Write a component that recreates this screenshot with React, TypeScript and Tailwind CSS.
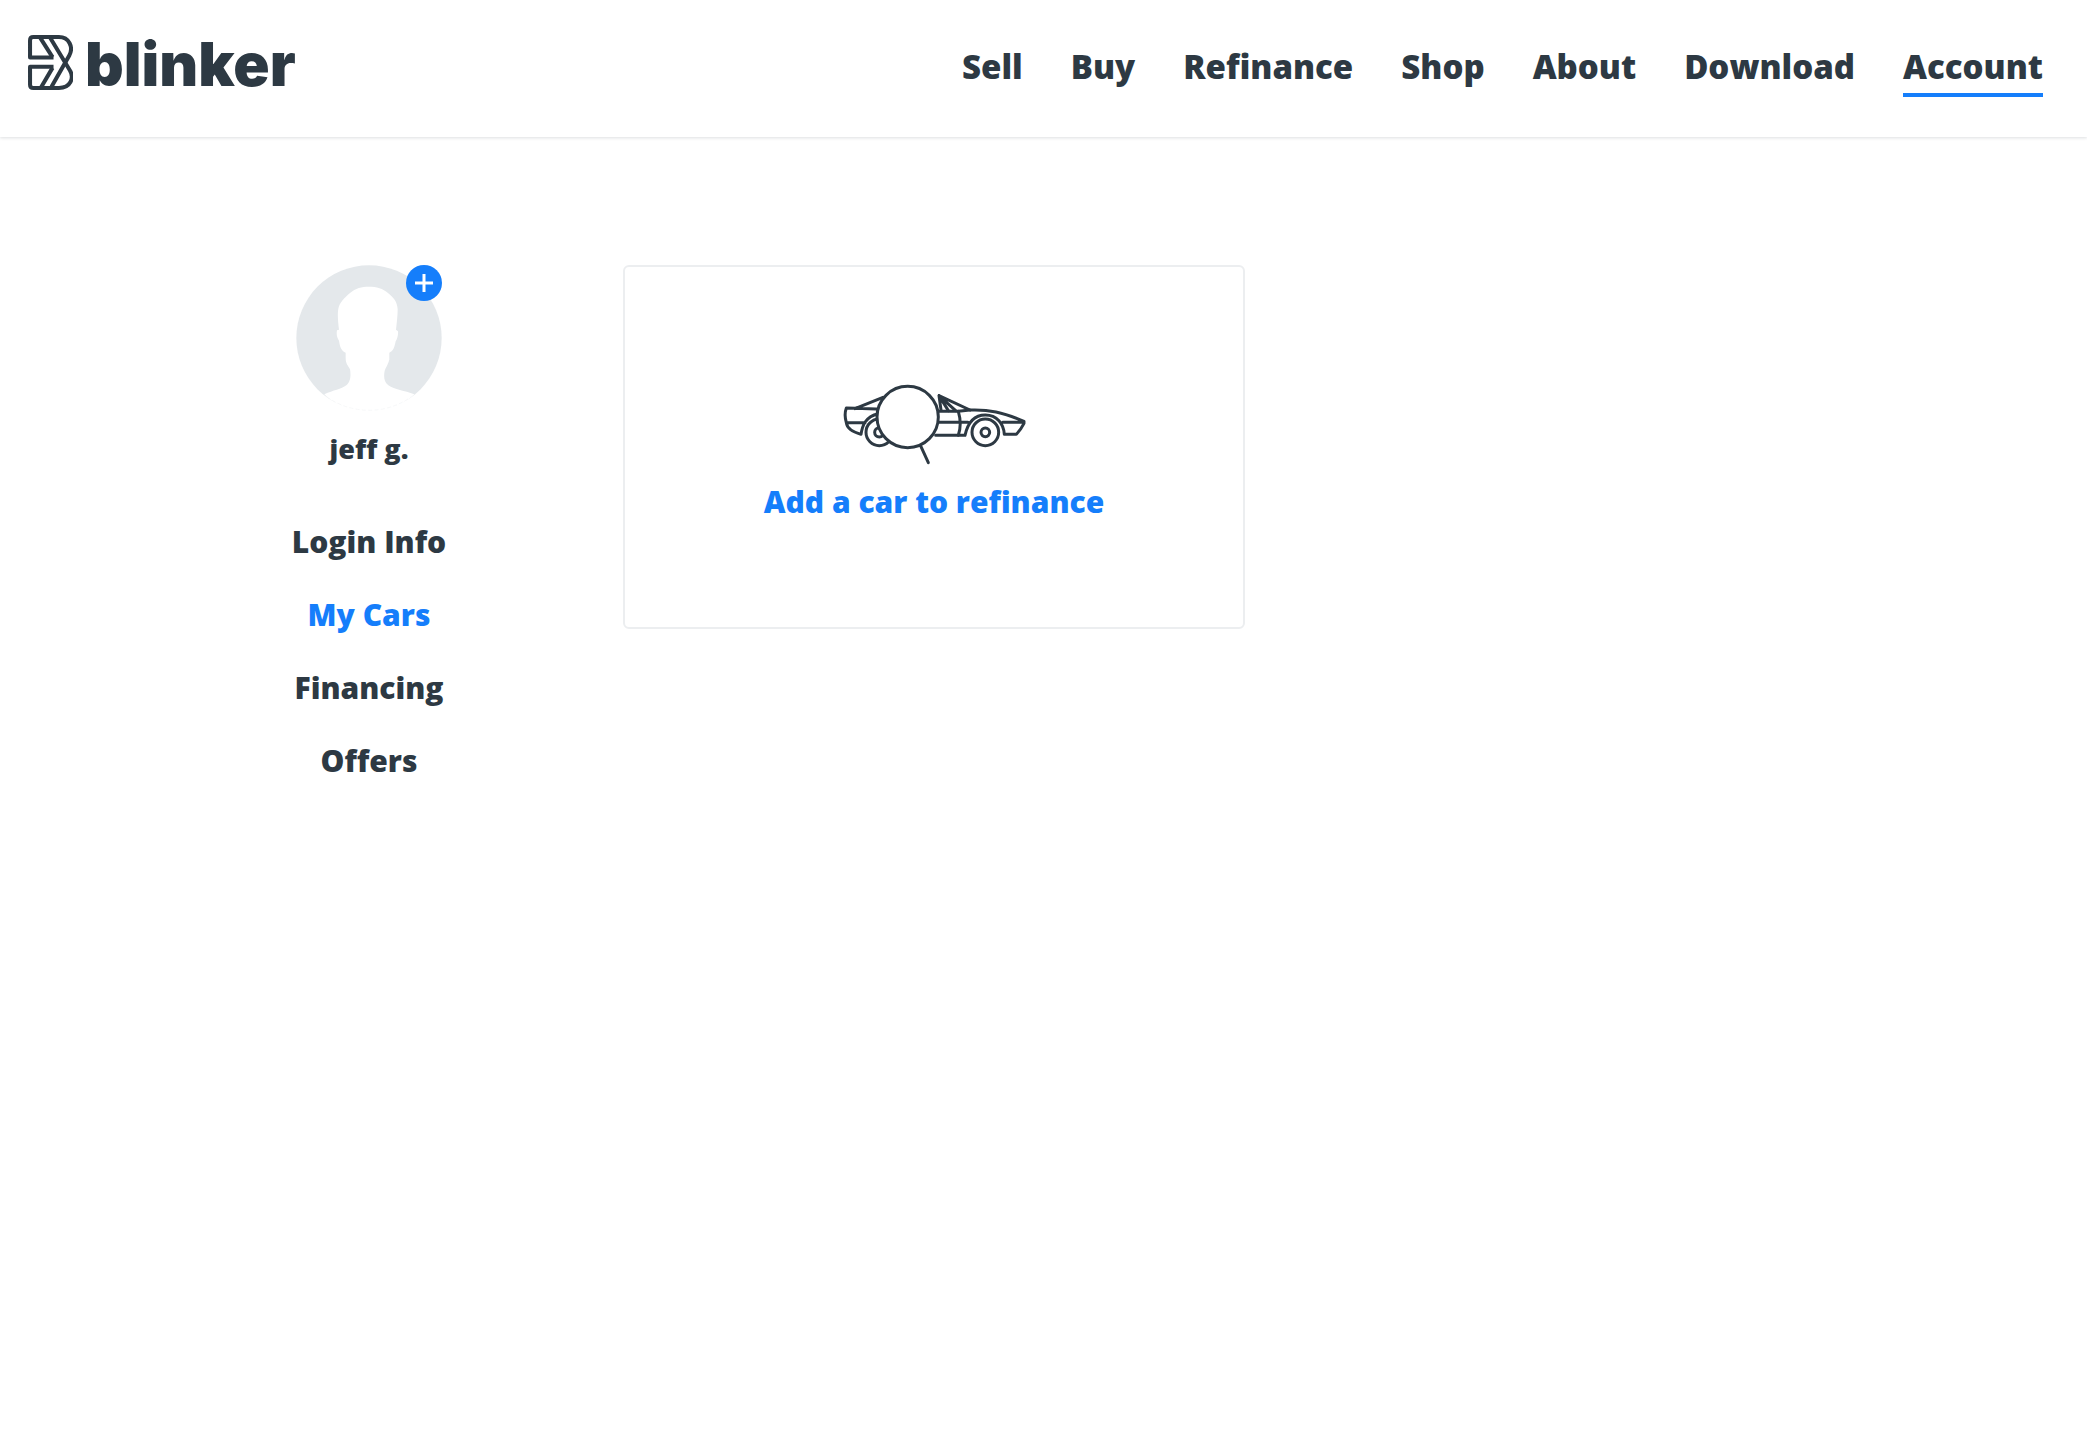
const navLinks = ["Sell", "Buy", "Refinance", "Shop", "About", "Download", "Account"];
const accountLinks = ["Login Info", "My Cars", "Financing", "Offers"];

function LogoMark() {
  return (
    <svg viewBox="84 74 134 164" className="h-[55px] w-[45px]" fill="none" stroke="#2d3943" strokeWidth="12" strokeLinejoin="round" aria-hidden="true">
      <path d="M160 141H90V90Q90 80 100 80H176C207 80 220 111 207 135L154 228" />
      <path d="M160 169H90V222Q90 232 100 232H176C211 232 222 202 209 180L150 82" />
      <path d="M120 82L157 140M157 172L123 230" />
    </svg>
  );
}

function Avatar() {
  return (
    <svg viewBox="48 45 438 438" className="size-[146px]" aria-hidden="true">
      <circle cx="267" cy="264" r="218" fill="#e4e8eb" />
      <path
        d="M133 433C160 421 184 417 199 406C214 394 212 370 210 358C203 346 197 340 197 325V308C184 302 180 292 177 272C170 263 169 251 171 241L177 239C174 215 172 190 175 176C178 160 193 143 210 129C226 114 246 110 266 110C290 110 309 115 324 129C341 143 352 155 353 178C353 198 350 220 348 239L354 244C355 255 352 266 347 274C343 292 341 303 328 308V329C325 342 317 352 314 362C311 378 311 395 325 406C344 420 373 421 403 433C374 463 321 484 267 484S160 463 133 433Z"
        fill="#fff"
      />
      <path d="M140 440A218 218 0 0 0 394 440" fill="none" stroke="#f3f5f6" strokeWidth="2" strokeDasharray="12 7" />
    </svg>
  );
}

function CarIcon() {
  return (
    <svg viewBox="40 44 546 240" className="h-[80px] w-[182px] overflow-visible" fill="none" stroke="#2d3943" strokeWidth="9" strokeLinecap="round" strokeLinejoin="round" aria-hidden="true">
      <path d="M160 84L76 118M160 120L76 117L50 116C44 132 46 146 50 160C52 177 65 187 94 195C98 170 106 142 146 133M50 160H106" />
      <circle cx="149" cy="189" r="40" />
      <circle cx="149" cy="189" r="14" />
      <path d="M324 126H386L421 122C478 120 518 128 583 156V162C576 176 570 184 560 195H524C522 164 502 137 467 137C431 137 414 162 406 198H318M324 159H415M519 159H583" />
      <path d="M386 126C393 150 394 174 386 198M421 122L328 79L334 122M328 79L356 124M328 79L378 124" />
      <circle cx="467" cy="189" r="40" />
      <circle cx="467" cy="189" r="13" />
      <circle cx="234" cy="143" r="92" fill="#fff" />
      <path d="M274 232L296 280" />
    </svg>
  );
}

export default function App() {
  return (
    <div className="min-h-screen bg-white font-['Open_Sans',sans-serif] font-extrabold text-[#2d3943]">
      <header className="flex h-[137px] items-start justify-between pr-11 pl-7 shadow-[0_1px_3px_rgba(45,57,67,0.16)]">
        <a href="#" aria-label="blinker" className="flex items-start gap-3 pt-[35px]">
          <LogoMark />
          <span className="font-['Inter',sans-serif] text-[60px] leading-[58px] font-black">blinker</span>
        </a>
        <nav aria-label="Main" className="flex gap-12 pt-[47px]">
          {navLinks.map((label) => (
            <a
              key={label}
              href="#"
              aria-current={label === "Account" ? "page" : undefined}
              className="border-b-4 border-transparent pb-1.5 text-[33px] leading-[40px] aria-[current=page]:border-[#157efb]"
            >
              {label}
            </a>
          ))}
        </nav>
      </header>

      <main className="mx-auto flex w-full max-w-[1557px] items-start gap-[150px] pt-32">
        <aside className="flex w-[208px] shrink-0 flex-col items-center">
          <div className="relative">
            <Avatar />
            <button type="button" aria-label="Add photo" className="absolute top-0 right-0 flex size-9 items-center justify-center rounded-full bg-[#157efb]">
              <svg viewBox="0 0 18 18" className="size-[18px]" stroke="#fff" strokeWidth="3" aria-hidden="true">
                <path d="M9 0V18M0 9H18" />
              </svg>
            </button>
          </div>
          <p className="mt-[18px] text-[27px] leading-[40px]">jeff g.</p>
          <nav aria-label="Account" className="mt-[53px] flex flex-col items-center gap-[33px]">
            {accountLinks.map((label) => (
              <a key={label} href="#" aria-current={label === "My Cars" ? "page" : undefined} className="text-[30px] leading-[40px] aria-[current=page]:text-[#157efb]">
                {label}
              </a>
            ))}
          </nav>
        </aside>

        <button type="button" className="flex h-[364px] w-[622px] flex-col items-center rounded-md border-2 border-[#eceef0] pt-[117px]">
          <CarIcon />
          <span className="mt-[18px] text-[30px] leading-[40px] text-[#157efb]">Add a car to refinance</span>
        </button>
      </main>
    </div>
  );
}
